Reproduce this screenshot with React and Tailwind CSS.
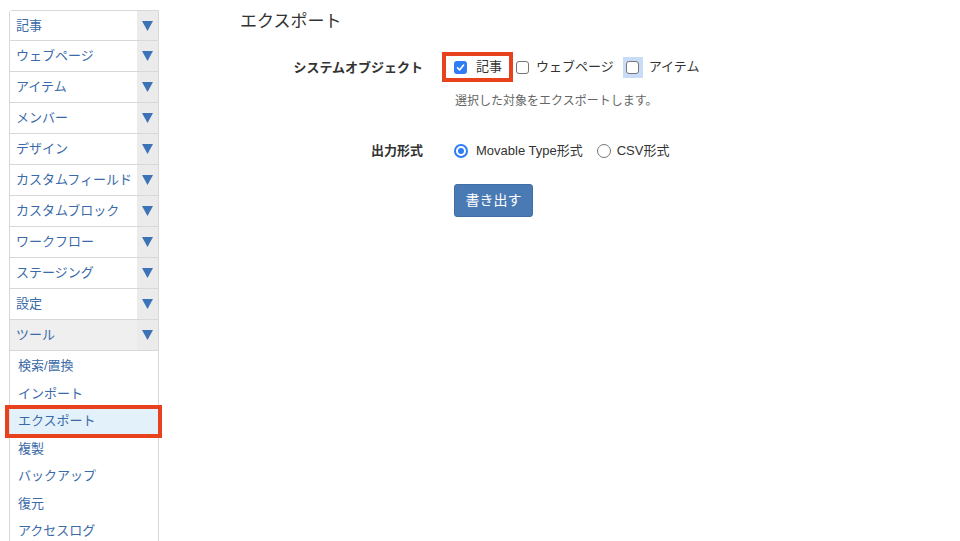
import React from 'react';

const font = { fontFamily: '"Liberation Sans", "Noto Sans CJK JP", sans-serif' };

const menus = [
  '記事', 'ウェブページ', 'アイテム', 'メンバー', 'デザイン', 'カスタムフィールド',
  'カスタムブロック', 'ワークフロー', 'ステージング', '設定', 'ツール',
];

const subItems = ['検索/置換', 'インポート', 'エクスポート', '複製', 'バックアップ', '復元', 'アクセスログ'];

const Arrow = () => (
  <svg width="11" height="10" viewBox="0 0 11 10">
    <polygon points="0,0 11,0 5.5,10" fill="#3c72b6" />
  </svg>
);

const CheckBox = ({ checked }) => (
  checked ? (
    <span className="shrink-0 w-[13px] h-[13px] rounded-[3px] bg-[#2f7cf6] flex items-center justify-center">
      <svg width="9" height="9" viewBox="0 0 9 9">
        <path d="M1.5 4.8 L3.6 6.9 L7.6 2" stroke="white" strokeWidth="1.6" fill="none" strokeLinecap="round" strokeLinejoin="round" />
      </svg>
    </span>
  ) : (
    <span className="shrink-0 block w-[13px] h-[13px] rounded-[3px] border border-[#767676] bg-white" />
  )
);

const Radio = ({ checked }) => (
  checked ? (
    <span className="shrink-0 w-[14px] h-[14px] rounded-full bg-[#2f7cf6] flex items-center justify-center">
      <span className="block w-[10px] h-[10px] rounded-full border-[2.5px] border-white bg-[#2f7cf6]" />
    </span>
  ) : (
    <span className="shrink-0 block w-[14px] h-[14px] rounded-full border border-[#767676] bg-white" />
  )
);

export default function App() {
  return (
    <div className="w-[960px] h-[541px] bg-white flex overflow-hidden text-[#333]" style={font}>
      {/* sidebar */}
      <aside className="w-[150px] ml-[9px] mt-[10px] flex flex-col">
        {menus.map((m, i) => {
          const open = m === 'ツール';
          return (
            <div
              key={m}
              className={`shrink-0 flex h-[31px] border-x border-b border-[#d8d8d8] ${i === 0 ? 'border-t rounded-tl-[3px]' : ''}`}
            >
              <div className={`flex-1 flex items-center pl-[6px] text-[13px] text-[#3a6aa8] ${open ? 'bg-[#efefef]' : 'bg-white'}`}>
                {m}
              </div>
              <div className="w-[21px] bg-[#ebebeb] flex items-center justify-center">
                <Arrow />
              </div>
            </div>
          );
        })}
        <div className="flex flex-col border-x border-[#d8d8d8] pt-[1px] flex-1">
          {subItems.map((s) => {
            const active = s === 'エクスポート';
            return (
              <div key={s} className="shrink-0 relative h-[27.5px]">
                {active && (
                  <span className="absolute left-[-5px] right-[-4px] top-[-2px] bottom-[-3px] border-[4px] border-[#e8411d]" />
                )}
                <div className={`h-full flex items-center pl-[8px] text-[13px] text-[#3a6aa8] ${active ? 'bg-[#e2f1fa]' : ''}`}>
                  {s}
                </div>
              </div>
            );
          })}
        </div>
      </aside>

      {/* main */}
      <main className="flex-1 pl-[81px] pt-[10px]">
        <h1 className="text-[17px] leading-[24px] text-[#333]">エクスポート</h1>

        <div className="flex mt-[18px]">
          <div className="w-[183px] text-right text-[13px] font-bold pt-[6px]">システムオブジェクト</div>
          <div className="ml-[19px] flex flex-col">
            <div className="flex items-center h-[30px] text-[13px]">
              <div className="relative flex items-center pl-[12px] pr-[11px] h-[30px]">
                <span className="absolute inset-0 border-[4px] border-[#e8411d]" />
                <CheckBox checked />
                <span className="ml-[9px]">記事</span>
              </div>
              <span className="ml-[3px]"><CheckBox /></span>
              <span className="ml-[7px]">ウェブページ</span>
              <span className="ml-[9px] w-[20px] h-[21px] bg-[#c9dcf7] flex items-center justify-center">
                <CheckBox />
              </span>
              <span className="ml-[6px]">アイテム</span>
            </div>
            <p className="ml-[13px] mt-[10px] text-[12px] text-[#666]">選択した対象をエクスポートします。</p>
          </div>
        </div>

        <div className="flex mt-[31px]">
          <div className="w-[183px] text-right text-[13px] font-bold">出力形式</div>
          <div className="ml-[31px] flex flex-col">
            <div className="flex items-center text-[13px] h-[19px]">
              <Radio checked />
              <span className="ml-[8px]">Movable Type形式</span>
              <span className="ml-[14px]"><Radio /></span>
              <span className="ml-[6px]">CSV形式</span>
            </div>
            <button className="mt-[24px] w-[79px] h-[33px] rounded-[3px] bg-[#4a7ab4] border border-[#3f6ea8] text-white text-[14px]">
              書き出す
            </button>
          </div>
        </div>
      </main>
    </div>
  );
}
